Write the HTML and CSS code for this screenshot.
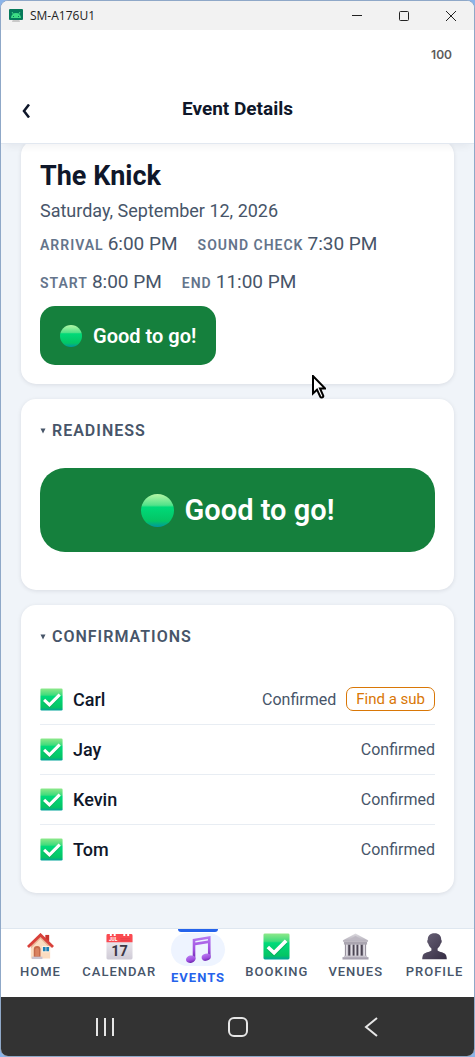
FILE: index.html
```html
<!DOCTYPE html>
<html lang="en">
<head>
    <meta charset="UTF-8">
    <title>Event Details</title>
    <meta name="viewport" content="width=device-width, initial-scale=1.0">
    <link rel="stylesheet" href="styles.css">
</head>
<body>
    <svg class="sprite" aria-hidden="true">
        <defs>
            <linearGradient id="green" x1="0" y1="0" x2="0" y2="1">
                <stop offset="0" stop-color="#8fe88a"/>
                <stop offset=".3" stop-color="#3fdc7c"/>
                <stop offset=".36" stop-color="#00da7a"/>
                <stop offset=".85" stop-color="#04c565"/>
                <stop offset="1" stop-color="#00a29a"/>
            </linearGradient>
            <linearGradient id="ball" x1="0" y1="0" x2="0" y2="1">
                <stop offset="0" stop-color="#b4f7a6"/>
                <stop offset=".34" stop-color="#52e28a"/>
                <stop offset=".4" stop-color="#00d978"/>
                <stop offset=".82" stop-color="#04c565"/>
                <stop offset="1" stop-color="#0097a0"/>
            </linearGradient>
            <linearGradient id="purple" x1="0" y1="0" x2="0" y2="1">
                <stop offset="0" stop-color="#b77af0"/>
                <stop offset=".6" stop-color="#a04fe0"/>
                <stop offset="1" stop-color="#6b27ae"/>
            </linearGradient>
            <linearGradient id="stone" x1="0" y1="0" x2="0" y2="1">
                <stop offset="0" stop-color="#dddbe0"/>
                <stop offset="1" stop-color="#b3aeb9"/>
            </linearGradient>
            <linearGradient id="bust" x1="0" y1="0" x2="1" y2="1">
                <stop offset="0" stop-color="#6a6378"/>
                <stop offset="1" stop-color="#352d43"/>
            </linearGradient>
            <linearGradient id="paper" x1="0" y1="0" x2="0" y2="1">
                <stop offset="0" stop-color="#f4f2f6"/>
                <stop offset="1" stop-color="#cfcbd6"/>
            </linearGradient>
        </defs>
        <symbol id="check" viewBox="0 0 28 28">
            <rect x=".5" y=".5" width="27" height="27" rx="1.5" fill="url(#green)"/>
            <path d="M5 16l6.500 6L24 9.500" fill="none" stroke="#0a9a56" stroke-width="3.600" opacity=".5"/>
            <path d="M5 14.500l6.500 6L24 8" fill="none" stroke="#fff" stroke-width="3.800"/>
        </symbol>
        <symbol id="dot" viewBox="0 0 32 32">
            <circle cx="16" cy="16" r="16" fill="url(#ball)"/>
        </symbol>
    </svg>

    <div class="window">
        <div class="titlebar">
            <svg class="app_icon" viewBox="0 0 14 14">
                <path d="M4 10h6l1 3H3z" fill="#c9c9c9"/>
                <rect width="14" height="11" rx="1" fill="#067a5b"/>
                <path d="M2 9a5 5 0 0 1 10 0z" fill="#3ddc84"/>
                <path d="M3 3l2 3M11 3L9 6" stroke="#3ddc84"/>
                <path d="M4 7h1v1H4zM9 7h1v1H9z" fill="#067a5b"/>
            </svg>
            <span class="window_name">SM-A176U1</span>
            <button class="window_btn" aria-label="Minimize">
                <svg viewBox="0 0 10 10"><path d="M0 4.500h10"/></svg>
            </button>
            <button class="window_btn" aria-label="Maximize">
                <svg viewBox="0 0 10 10"><rect x=".5" y=".5" width="9" height="9" rx="1"/></svg>
            </button>
            <button class="window_btn" aria-label="Close">
                <svg viewBox="0 0 10 10"><path d="M0 0l10 10M10 0L0 10"/></svg>
            </button>
        </div>

        <div class="status">100</div>

        <header class="header">
            <button class="back" aria-label="Back">
                <svg viewBox="0 0 8 14"><path d="M7 .5L2 7l5 6.500"/></svg>
            </button>
            <h1>Event Details</h1>
        </header>

        <main class="content">
            <section class="card event">
                <h2>The Knick</h2>
                <p class="date">Saturday, September 12, 2026</p>
                <dl class="times">
                    <div><dt>Arrival</dt><dd>6:00 PM</dd></div>
                    <div><dt>Sound check</dt><dd>7:30 PM</dd></div>
                    <div><dt>Start</dt><dd>8:00 PM</dd></div>
                    <div><dt>End</dt><dd>11:00 PM</dd></div>
                </dl>
                <button class="go"><svg><use href="#dot"/></svg>Good to go!</button>
            </section>

            <details class="card readiness" open>
                <summary><svg viewBox="0 0 6 6"><path d="M.5 .5h5L3 5.500z"/></svg>Readiness</summary>
                <button class="go big"><svg><use href="#dot"/></svg>Good to go!</button>
            </details>

            <details class="card" open>
                <summary><svg viewBox="0 0 6 6"><path d="M.5 .5h5L3 5.500z"/></svg>Confirmations</summary>
                <ul class="people">
                    <li>
                        <svg><use href="#check"/></svg>
                        <strong>Carl</strong>
                        <span>Confirmed</span>
                        <button class="sub">Find a sub</button>
                    </li>
                    <li>
                        <svg><use href="#check"/></svg>
                        <strong>Jay</strong>
                        <span>Confirmed</span>
                    </li>
                    <li>
                        <svg><use href="#check"/></svg>
                        <strong>Kevin</strong>
                        <span>Confirmed</span>
                    </li>
                    <li>
                        <svg><use href="#check"/></svg>
                        <strong>Tom</strong>
                        <span>Confirmed</span>
                    </li>
                </ul>
            </details>
        </main>

        <nav class="tabs">
            <a href="#home">
                <svg viewBox="0 0 28 28">
                    <path d="M19 2h4v7h-4z" fill="#c9352f"/>
                    <path d="M4 13L14 3l10 10v13.500H4z" fill="#fbdcc0"/>
                    <path d="M4 13L14 3l10 10v3L14 6 4 16z" fill="#e9b596"/>
                    <path d="M1 14.500L14 2l13 12.500" fill="none" stroke="#d8403a" stroke-width="3"/>
                    <path d="M7 25v-8a3.500 3.500 0 0 1 7 0v8z" fill="#c4694a"/>
                    <path d="M8.500 24v-6.500a2 2 0 0 1 4 0V24z" fill="#d98260"/>
                    <path d="M5 24.500h11v2.500H5z" fill="#c9c3d0"/>
                    <path d="M15.500 13.500h8v6.500h-8z" fill="#fff0df"/>
                    <path d="M16.500 14.500h2.800v4.500h-2.800zM20 14.500h2.800v4.500H20z" fill="#1e7fb5"/>
                </svg>
                Home
            </a>
            <a href="#calendar">
                <svg viewBox="0 0 28 28">
                    <rect x=".5" y="1" width="27" height="26.500" rx="1.500" fill="url(#paper)"/>
                    <path d="M.5 9.500V2.500A1.500 1.500 0 0 1 2 1h24a1.500 1.500 0 0 1 1.500 1.500v7z" fill="#fb4a50"/>
                    <path d="M4 0h2v3H4zM8 0h2v3H8zM18 0h2v3h-2zM22 0h2v3h-2z" fill="#fff"/>
                    <path d="M15 6h10M15 8h10" stroke="#e23b46" stroke-width=".8"/>
                    <text x="3" y="8.500" class="month">JUL</text>
                    <text x="14" y="24" class="day">17</text>
                </svg>
                Calendar
            </a>
            <a href="#events" class="active" aria-current="page">
                <span class="pill">
                    <svg viewBox="0 0 28 28">
                        <path d="M8 3L26.500 0v21.500h-2.700V7.500L10.700 9.600v14H8z" fill="url(#purple)"/>
                        <path d="M10.700 5.200l13.100-2.100v1.600l-13.100 2.100z" fill="#eef4ff"/>
                        <ellipse cx="6" cy="24" rx="5" ry="3.800" fill="url(#purple)" transform="rotate(-15 6 24)"/>
                        <ellipse cx="22" cy="22" rx="4.800" ry="3.600" fill="url(#purple)" transform="rotate(-15 22 22)"/>
                    </svg>
                </span>
                Events
            </a>
            <a href="#booking">
                <svg><use href="#check"/></svg>
                Booking
            </a>
            <a href="#venues">
                <svg viewBox="0 0 28 28">
                    <path d="M3 11h22v13H3z" fill="#8c8693"/>
                    <path d="M14 .5L27 7.500V9H1V7.500z" fill="url(#stone)"/>
                    <path d="M14 3l8 4.500H6z" fill="#bdb8c2"/>
                    <path d="M2 9h24v3H2z" fill="#aaa5b0"/>
                    <path d="M5 12v12M10 12v12M14 12v12M18 12v12M23 12v12" stroke="#dfdce3" stroke-width="2"/>
                    <path d="M7.500 12.500v11M12 12.500v11M16 12.500v11M20.500 12.500v11" stroke="#4c4654" stroke-width="1.600"/>
                    <path d="M2 23.500h24V25H2z" fill="#c8c4cd"/>
                    <path d="M.5 25h27v2.500H.5z" fill="#a9a3b1"/>
                </svg>
                Venues
            </a>
            <a href="#profile">
                <svg viewBox="0 0 28 28">
                    <path d="M14 .3c4.600 0 7 2.700 7 6.800.8.300.8 3.300-.6 4.100-.6 2.200-1.800 3.700-3.200 4.800v2.200c1.500 1.600 8 1.700 9 5.300.5 1.400.5 2.700.5 3.800H1.300c0-1.100 0-2.400.5-3.800 1-3.600 7.500-3.700 9-5.300V16c-1.400-1.100-2.600-2.600-3.200-4.800C6.200 10.400 6.200 7.400 7 7.100 7 3 9.400.3 14 .3z" fill="url(#bust)"/>
                </svg>
                Profile
            </a>
        </nav>

        <div class="system">
            <button aria-label="Recent apps">
                <svg viewBox="0 0 20 20"><path d="M2 1v18M10 1v18M18 1v18"/></svg>
            </button>
            <button aria-label="Home screen">
                <svg viewBox="0 0 20 20"><rect x="1" y="1" width="18" height="18" rx="5"/></svg>
            </button>
            <button aria-label="Go back">
                <svg viewBox="0 0 20 20"><path d="M16 1L5 10l11 9"/></svg>
            </button>
        </div>

        <svg class="cursor" viewBox="0 0 14 24" aria-hidden="true">
            <path d="M1 1v17.500l4-3.800 3.400 7.300c.8 1.200 3.400.2 2.800-1.400L8 13.500h5.200z"/>
        </svg>
    </div>
</body>
</html>
```

FILE: styles.css
```css
:root {
    --ink: #0f172a;
    --slate-600: #475569;
    --slate-500: #64748b;
    --line: #e8edf3;
    --page: #f0f4f9;
    --green: #15803d;
    --blue: #2563eb;
    --amber: #d97706;
    --frame: #8fa8c8;
}
* {
    box-sizing: border-box;
    margin: 0;
    padding: 0;
}
body {
    background: #8ab4ea;
    font-family: Roboto, sans-serif;
    color: var(--ink);
}
button {
    font-family: inherit;
    border: none;
    background: none;
    cursor: pointer;
}
.sprite {
    position: absolute;
    width: 0;
    height: 0;
}

/* Window */
.window {
    position: relative;
    display: flex;
    flex-direction: column;
    min-height: 100vh;
    border: 1px solid var(--frame);
    border-radius: 8px;
    background: #fff;
    overflow: hidden;
}
.titlebar {
    display: flex;
    align-items: center;
    height: 29px;
    padding-left: 8px;
    background: #f2f2f2;
    font-family: "Open Sans", sans-serif;
    font-size: 12px;
    color: #222;
}
.app_icon {
    width: 14px;
    height: 14px;
    margin-right: 7px;
}
.window_name {
    flex: 1;
}
.window_btn {
    display: flex;
    align-items: center;
    justify-content: center;
    width: 47px;
    height: 100%;
}
.window_btn svg {
    width: 10px;
    height: 10px;
    fill: none;
    stroke: #222;
    overflow: visible;
}
.status {
    padding: 0 22px;
    font-family: Inter, sans-serif;
    font-size: 12px;
    line-height: 50px;
    font-weight: 600;
    text-align: right;
    color: #5c5c5c;
}

/* Header */
.header {
    position: relative;
    z-index: 1;
    display: flex;
    align-items: center;
    padding: 14px 15px 19px;
    border-bottom: 1px solid #e2e8f0;
    background: #fff;
    box-shadow: 0 6px 8px -4px rgba(15, 23, 42, 0.06);
}
.header h1 {
    flex: 1;
    padding-right: 20px;
    font-size: 19px;
    line-height: 30px;
    font-weight: 700;
    text-align: center;
}
.back {
    display: flex;
    align-items: center;
    justify-content: center;
    width: 20px;
    height: 30px;
    padding-top: 4px;
}
.back svg {
    width: 8px;
    height: 14px;
    fill: none;
    stroke: var(--ink);
    stroke-width: 2.5;
}

/* Cards */
.content {
    flex: 1;
    display: flex;
    flex-direction: column;
    gap: 15px;
    padding: 0 20px 34px;
    background: var(--page);
}
.card {
    padding: 19px;
    border-radius: 15px;
    background: #fff;
    box-shadow: 0 1px 4px rgba(15, 23, 42, 0.1);
}
.card summary {
    display: flex;
    align-items: center;
    gap: 6px;
    margin-bottom: 25px;
    font-size: 16px;
    line-height: 25px;
    font-weight: 600;
    letter-spacing: 1px;
    text-transform: uppercase;
    color: var(--slate-600);
    cursor: pointer;
}
.card summary svg {
    width: 6px;
    height: 6px;
    fill: var(--slate-600);
}
.event {
    margin-top: -4px;
}
.event h2 {
    font-size: 27px;
    line-height: 34px;
    font-weight: 700;
}
.date {
    margin: 5px 0 6px;
    font-size: 18px;
    line-height: 26px;
    color: var(--slate-600);
}
.times {
    display: flex;
    flex-wrap: wrap;
    gap: 10px 20px;
    margin-bottom: 10px;
    line-height: 28px;
    color: var(--slate-600);
}
.times div {
    display: flex;
    align-items: baseline;
    gap: 4px;
}
.times dt {
    font-size: 14px;
    line-height: 20px;
    font-weight: 600;
    letter-spacing: 1px;
    text-transform: uppercase;
    color: var(--slate-500);
}
.times dd {
    font-size: 19px;
}

/* Readiness */
.go {
    display: flex;
    align-items: center;
    justify-content: center;
    gap: 11px;
    height: 59px;
    padding: 0 20px;
    border-radius: 15px;
    background: var(--green);
    color: #fff;
    font-size: 20px;
    font-weight: 600;
}
.go svg {
    width: 22px;
    height: 22px;
}
.go.big {
    width: 100%;
    height: 84px;
    border-radius: 25px;
    font-size: 29px;
}
.go.big svg {
    width: 33px;
    height: 33px;
}
.readiness {
    padding-bottom: 38px;
}

/* Confirmations */
.people {
    list-style: none;
}
.people li {
    display: flex;
    align-items: center;
    gap: 10px;
    height: 50px;
}
.people li + li {
    border-top: 1px solid var(--line);
}
.people svg {
    width: 23px;
    height: 23px;
}
.people strong {
    flex: 1;
    font-size: 18px;
    font-weight: 500;
}
.people span {
    font-size: 16px;
    color: var(--slate-600);
}
.sub {
    height: 24px;
    padding: 0 9px;
    border: 1px solid var(--amber);
    border-radius: 7px;
    font-size: 15px;
    color: var(--amber);
}

/* Tabs */
.tabs {
    display: flex;
    height: 69px;
    border-top: 1px solid #dfe7f0;
    background: #fff;
}
.tabs a {
    position: relative;
    flex: 1 1 0;
    min-width: 0;
    display: flex;
    flex-direction: column;
    align-items: center;
    gap: 2px;
    padding-top: 4px;
    font-size: 13px;
    line-height: 20px;
    font-weight: 500;
    letter-spacing: 1px;
    text-transform: uppercase;
    text-decoration: none;
    white-space: nowrap;
    color: var(--slate-600);
}
.tabs svg {
    width: 27px;
    height: 27px;
}
.tabs .active {
    font-weight: 700;
    color: var(--blue);
}
.tabs .active::before {
    content: "";
    position: absolute;
    top: 0;
    width: 40px;
    height: 3px;
    border-radius: 0 0 3px 3px;
    background: var(--blue);
}
.pill {
    display: flex;
    align-items: center;
    justify-content: center;
    width: 54px;
    height: 33px;
    border-radius: 17px;
    background: #eef4ff;
}
.month {
    font: 700 5px Roboto, sans-serif;
    letter-spacing: 0;
    fill: #fff;
}
.day {
    font: 700 15px Roboto, sans-serif;
    letter-spacing: 0;
    text-anchor: middle;
    fill: #3d3846;
}

/* System bar */
.system {
    display: flex;
    justify-content: center;
    gap: 93px;
    height: 59px;
    padding-top: 4px;
    background: #333;
}
.system button {
    width: 40px;
}
.system svg {
    width: 20px;
    height: 20px;
    fill: none;
    stroke: #e6e6e6;
    stroke-width: 2;
}

.cursor {
    position: absolute;
    left: 311px;
    top: 374px;
    z-index: 2;
    width: 14px;
    height: 24px;
    fill: #fff;
    stroke: #000;
    stroke-width: 2;
}
```
